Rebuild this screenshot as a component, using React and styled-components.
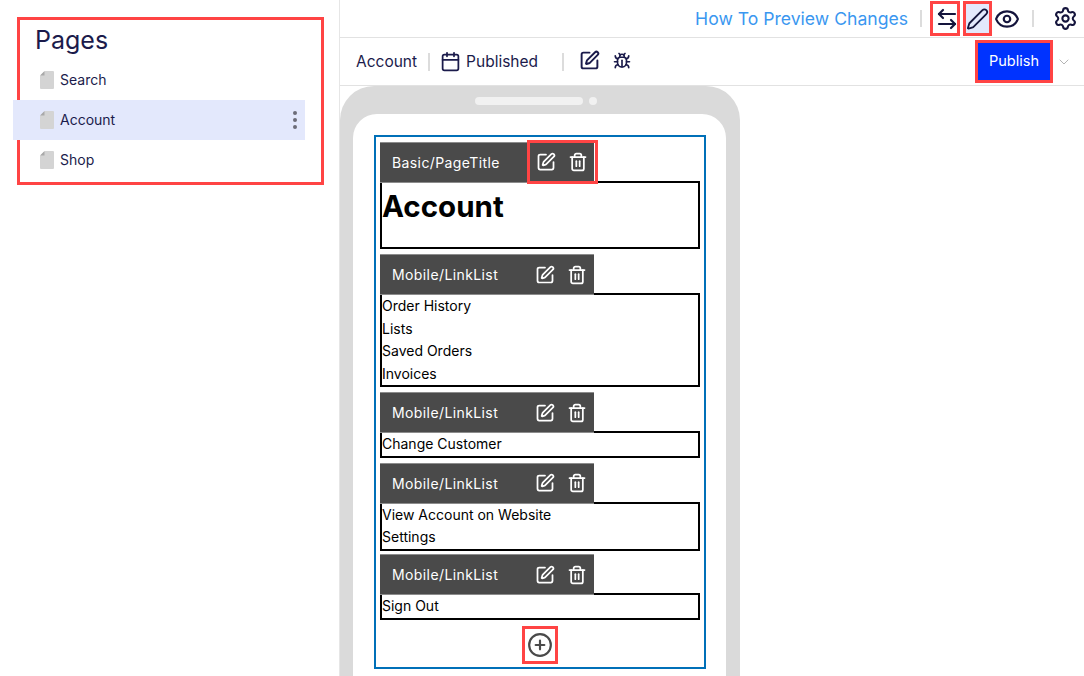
import React from 'react'
import styled, { createGlobalStyle } from 'styled-components'
import { ArrowLeftRight, Bug, Calendar, CirclePlus, Eye, Pen, Settings, SquarePen, Trash2, ChevronDown } from 'lucide-react'

const Global = createGlobalStyle`
html, body { margin: 0; padding: 0; background: #fff; overflow: hidden; }
* { box-sizing: border-box; }
`

const Page = styled.div`
display: grid;
grid-template-columns: 340px 1fr;
width: 1084px;
height: 676px;
overflow: hidden;
font-family: Inter, "Liberation Sans", sans-serif;
color: #1b1b4b;
`

const Sidebar = styled.aside`
border-right: 1px solid #e6e6e6;
padding: 17px 16px 0 17px;
`

const PagesBox = styled.div`
width: 307px;
height: 168px;
border: 3px solid #ff4444;
`

const PagesTitle = styled.h2`
margin: 0;
padding: 4px 0 0 15px;
height: 40px;
font-size: 25px;
line-height: 32px;
font-weight: 400;
`

const PageRow = styled.div`
display: flex;
align-items: center;
gap: 6px;
height: 40px;
margin-left: -7px;
width: 292px;
padding: 0 8px 0 27px;
font-size: 14px;
background: ${p => (p.$active ? '#e3e8fc' : 'transparent')};
`

const RowName = styled.span`
flex: 1;
margin-bottom: 2px;
`

const Kebab = styled.span`
display: flex;
flex-direction: column;
gap: 3px;
& > i {
  width: 4px;
  height: 4px;
  border-radius: 50%;
  background: #6c6c78;
}
`

const Main = styled.main`
display: flex;
flex-direction: column;
min-width: 0;
`

const TopBar = styled.div`
display: flex;
align-items: center;
height: 38px;
padding-right: 6px;
border-bottom: 1px solid #e2e2e2;
`

const HelpLink = styled.a`
margin-left: auto;
color: #3a97f0;
font-size: 17.6px;
`

const Divider = styled.span`
width: 2px;
height: ${p => p.$h || 17}px;
background: #dcdcdc;
margin: ${p => p.$m || '0 10px'};
`

const ToolButton = styled.span`
display: flex;
align-items: center;
justify-content: center;
width: ${p => p.$w || 30}px;
height: 35px;
margin-right: ${p => p.$after || 0}px;
color: #14143c;
background: ${p => (p.$active ? '#e3e8fc' : 'transparent')};
border: ${p => (p.$marked ? '3px solid #ff4444' : 'none')};
`

const SwapIcon = styled(ArrowLeftRight)`
margin-left: 3px;
flex-shrink: 0;
`

const SubBar = styled.div`
display: flex;
align-items: center;
height: 48px;
padding: 0 12px 0 16px;
border-bottom: 1px solid #e2e2e2;
font-size: 15.5px;
`

const Status = styled.span`
margin-left: 5px;
`

const EditIcon = styled(SquarePen)`
margin-bottom: 2px;
`

const BugIcon = styled(Bug)`
margin: 0 0 2px 13px;
`

const PublishButton = styled.button`
margin-left: auto;
width: 78px;
height: 43px;
padding: 0 0 2px;
border: 3px solid #ff4444;
background: #0033ff;
color: #fff;
font: 400 14.5px Inter, sans-serif;
`

const PublishMenu = styled.span`
display: flex;
margin-left: 3px;
color: #b4b4b4;
`

const PhoneArea = styled.div`
flex: 1;
min-height: 0;
`

const Phone = styled.div`
width: 400px;
height: 640px;
padding: 28px 14px 0 13px;
background: #dadada;
border-radius: 34px 34px 0 0;
position: relative;
`

const Speaker = styled.div`
position: absolute;
top: 11px;
left: 135px;
display: flex;
gap: 6px;
`

const SpeakerPart = styled.i`
height: 8px;
width: ${p => p.$w}px;
border-radius: 4px;
background: #f1f1f1;
`

const Screen = styled.div`
height: 100%;
background: #fff;
border-radius: 24px 24px 0 0;
padding: 21px 21px 0;
`

const Canvas = styled.div`
width: 332px;
height: 534px;
border: 2px solid #0070b8;
padding: 5px 4px 0;
color: #000;
`

const Block = styled.section`
margin-bottom: ${p => p.$gap ?? 5}px;
`

const BlockBar = styled.div`
display: flex;
align-items: center;
width: 214px;
height: 41px;
margin-bottom: -2px;
padding-left: 12px;
background: #4a4a4a;
border-top: 1px solid #8c8c8c;
border-bottom: 1px solid #8c8c8c;
color: #fff;
font-size: 14px;
letter-spacing: 0.4px;
font-weight: 400;
position: relative;
`

const BarLabel = styled.span`
width: 143px;
`

const BarIcons = styled.div`
display: flex;
align-items: center;
gap: 12px;
`

const MarkedIcons = styled(BarIcons)`
position: absolute;
top: -3px;
left: 147px;
width: 71px;
height: 44px;
padding-left: 6px;
border: 3px solid #ff4444;
`

const BlockBody = styled.div`
width: 320px;
border: 2px solid #000;
font-size: 14px;
line-height: 22.5px;
min-height: ${p => p.$min || 0}px;
`

const Heading = styled.h1`
margin: 0;
font-size: 29.5px;
line-height: 46px;
font-weight: 700;
`

const AddWrap = styled.div`
display: flex;
justify-content: center;
margin-top: 6.5px;
`

const AddButton = styled.span`
display: flex;
align-items: center;
justify-content: center;
width: 36px;
height: 38px;
border: 3px solid #ff4444;
color: #4a4a4a;
`

const PageIcon = () => (
  <svg width="14" height="18" viewBox="0 0 14 18">
    <path d="M5 0h8a1 1 0 0 1 1 1v16a1 1 0 0 1-1 1H1a1 1 0 0 1-1-1V5z" fill="#d4d4d4" />
    <path d="M0 4.5L4.5 0v4.5z" fill="#a9a9a9" />
  </svg>
)

const blocks = [
  { links: ['Order History', 'Lists', 'Saved Orders', 'Invoices'], gap: 5 },
  { links: ['Change Customer'], gap: 5 },
  { links: ['View Account on Website', 'Settings'], gap: 3.5 },
  { links: ['Sign Out'], gap: 0 },
]

const pageNames = ['Search', 'Account', 'Shop']

export default function App() {
  return (
    <Page>
      <Global />
      <Sidebar>
        <PagesBox>
          <PagesTitle>Pages</PagesTitle>
          {pageNames.map(name => (
            <PageRow key={name} $active={name === 'Account'}>
              <PageIcon />
              <RowName>{name}</RowName>
              {name === 'Account' && <Kebab><i /><i /><i /></Kebab>}
            </PageRow>
          ))}
        </PagesBox>
      </Sidebar>
      <Main>
        <TopBar>
          <HelpLink>How To Preview Changes</HelpLink>
          <Divider $m="0 8px 0 12px" />
          <ToolButton $marked $w={30} $after={3}><SwapIcon size={24} strokeWidth={2.2} /></ToolButton>
          <ToolButton $marked $active $w={29}><Pen size={24} strokeWidth={1.9} /></ToolButton>
          <ToolButton $w={29}><Eye size={26} strokeWidth={2} /></ToolButton>
          <Divider $m="0 18px 0 11px" />
          <ToolButton $w={26}><Settings size={25} strokeWidth={2} /></ToolButton>
        </TopBar>
        <SubBar>
          <span>Account</span>
          <Divider $m="0 10px 0 11px" $h={18} />
          <Calendar size={21} strokeWidth={2} />
          <Status>Published</Status>
          <Divider $m="0 15px 0 24px" $h={18} />
          <EditIcon size={21} strokeWidth={2.2} />
          <BugIcon size={18} strokeWidth={2.2} />
          <PublishButton>Publish</PublishButton>
          <PublishMenu><ChevronDown size={16} strokeWidth={1.5} /></PublishMenu>
        </SubBar>
        <PhoneArea>
          <Phone>
            <Speaker>
              <SpeakerPart $w={108} />
              <SpeakerPart $w={8} />
            </Speaker>
            <Screen>
              <Canvas>
                <Block>
                  <BlockBar>
                    <BarLabel>Basic/PageTitle</BarLabel>
                    <MarkedIcons>
                      <SquarePen size={20} strokeWidth={2.1} />
                      <Trash2 size={20} strokeWidth={2.1} />
                    </MarkedIcons>
                  </BlockBar>
                  <BlockBody $min={68}><Heading>Account</Heading></BlockBody>
                </Block>
                {blocks.map(b => (
                  <Block key={b.links[0]} $gap={b.gap}>
                    <BlockBar>
                      <BarLabel>Mobile/LinkList</BarLabel>
                      <BarIcons>
                        <SquarePen size={20} strokeWidth={2.1} />
                        <Trash2 size={20} strokeWidth={2.1} />
                      </BarIcons>
                    </BlockBar>
                    <BlockBody>{b.links.map(l => <div key={l}>{l}</div>)}</BlockBody>
                  </Block>
                ))}
                <AddWrap>
                  <AddButton><CirclePlus size={26} strokeWidth={2} /></AddButton>
                </AddWrap>
              </Canvas>
            </Screen>
          </Phone>
        </PhoneArea>
      </Main>
    </Page>
  )
}
